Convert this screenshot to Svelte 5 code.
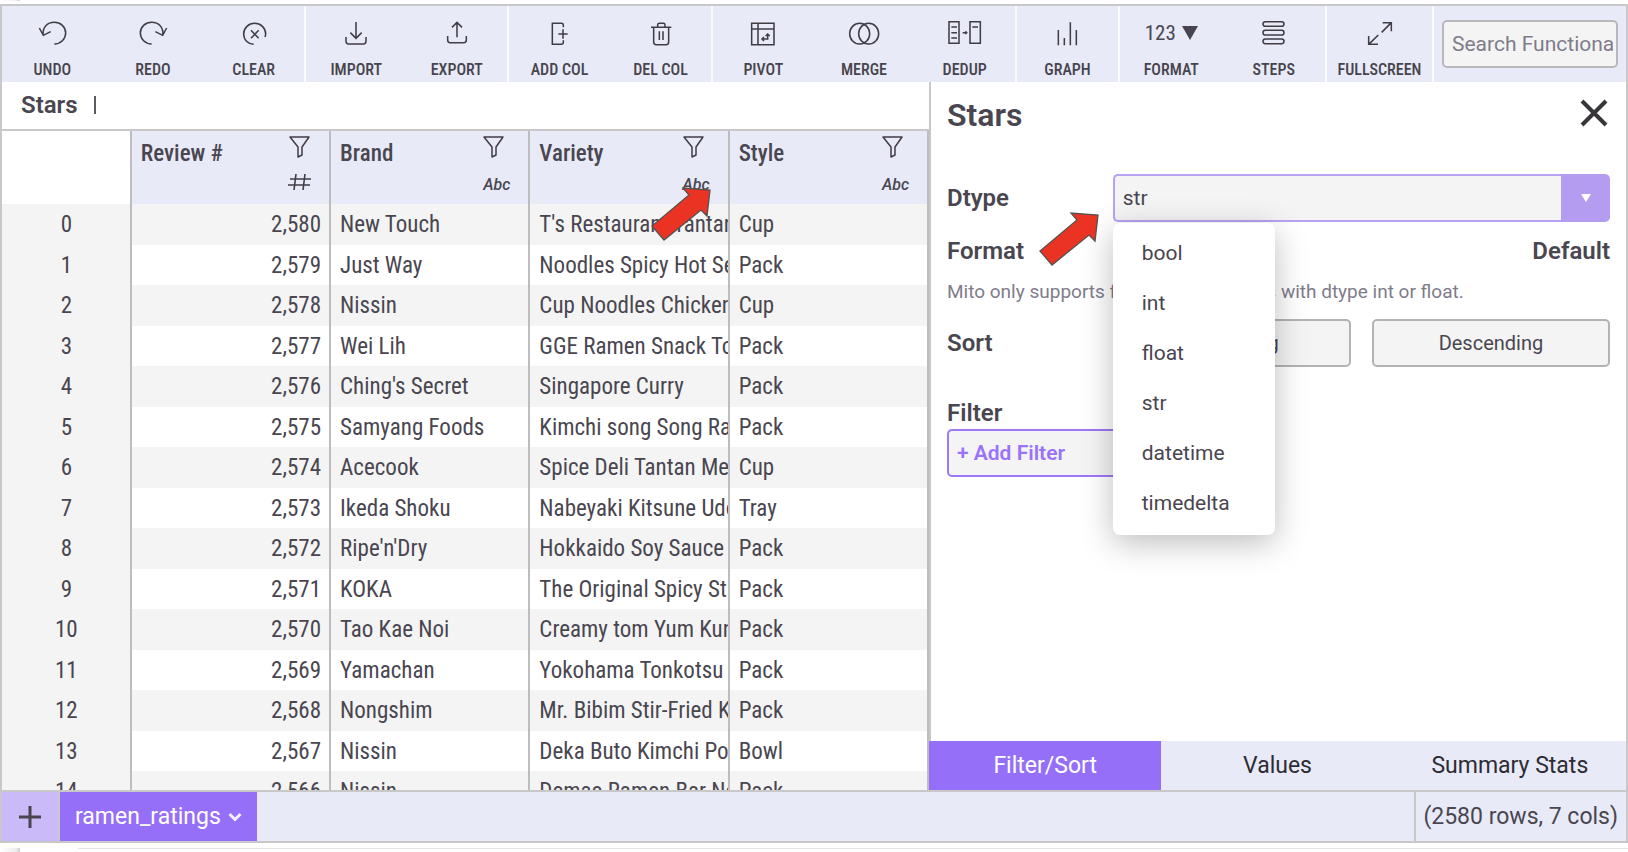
<script>
  const groups = [
    [{ id: 'undo', label: 'UNDO', x: 102 }, { id: 'redo', label: 'REDO', x: 405 }, { id: 'clear', label: 'CLEAR', x: 708 }],
    [{ id: 'import', label: 'IMPORT', x: 1013 }, { id: 'export', label: 'EXPORT', x: 1317 }],
    [{ id: 'addcol', label: 'ADD COL', x: 125 }, { id: 'delcol', label: 'DEL COL', x: 427 }],
    [{ id: 'pivot', label: 'PIVOT', x: 735 }, { id: 'merge', label: 'MERGE', x: 1038 }, { id: 'dedup', label: 'DEDUP', x: 1341 }],
    [{ id: 'graph', label: 'GRAPH', x: 118 }],
    [{ id: 'format', label: 'FORMAT', x: 0 }, { id: 'steps', label: 'STEPS', x: 737 }],
    [{ id: 'fullscreen', label: 'FULLSCREEN', x: 1055 }]
  ];

  const icons = {
    undo: 'M118 82L130 104L152 93 M130 104C126 80 143 65 163 65C182 65 197 79 197 97C197 115 182 130 163 130',
    redo: 'M500 82L488 104L466 93 M488 104C492 80 475 65 455 65C436 65 421 79 421 97C421 115 436 130 455 130',
    clear: 'M753 89L776 113M776 89L753 113 M761 131C744 130 731 117 731 100C731 82 746 68 764 68C782 68 797 82 797 100C797 103 796 106 795 109',
    import: 'M1067 64V113M1050 96L1067 113L1084 96 M1037 109V122Q1037 130 1045 130H1089Q1097 130 1097 122V109',
    export: 'M1371 110V66M1356 80L1371 65L1386 80 M1343 106V118Q1343 126 1351 126H1391Q1399 126 1399 118V106',
    addcol: 'M189 80V74Q189 68 183 68H156V131H183Q189 131 189 125V119 M174 100H202M188 86V114',
    delcol: 'M451 80H512 M471 79V73Q471 68 476 68H488Q493 68 493 73V79 M459 82V124Q459 132 467 132H496Q504 132 504 124V82 M476 92V118M487 92V118',
    pivot: 'M755 68H822V132H755Z M755 85H822M774 68V132 M786 115H803V101 M792 109L786 115L792 121 M797 106L803 100L809 106',
    merge: 'M1049 99A30 31 0 1 0 1109 99A30 31 0 1 0 1049 99 M1076 99A30 31 0 1 0 1136 99A30 31 0 1 0 1076 99',
    dedup: 'M1347 63H1377V128H1347Z M1410 63H1441V128H1410Z M1354 79H1371M1354 96H1371M1354 112H1371M1417 79H1434 M1388 96H1400M1396 92L1400 96L1396 100',
    graph: 'M143 88V134M161 112V134M179 65V134M197 88V134',
    steps: 'M765 63H814A7 7 0 0 1 814 77H765A7 7 0 0 1 765 63Z M765 89H814A7 7 0 0 1 814 103H765A7 7 0 0 1 765 89Z M765 115H814A7 7 0 0 1 814 129H765A7 7 0 0 1 765 115Z',
    fullscreen: 'M1114 95L1143 66M1117 66H1143V92 M1104 103L1075 131M1075 106V131H1103'
  };

  const columns = [
    { name: 'Review #', kind: 'number' },
    { name: 'Brand', kind: 'text' },
    { name: 'Variety', kind: 'text', marked: true },
    { name: 'Style', kind: 'text' }
  ];

  const rows = [
    ['2,580', 'New Touch', "T's Restaurant Tantanmen", 'Cup'],
    ['2,579', 'Just Way', 'Noodles Spicy Hot Sesame', 'Pack'],
    ['2,578', 'Nissin', 'Cup Noodles Chicken Vegetable', 'Cup'],
    ['2,577', 'Wei Lih', 'GGE Ramen Snack Tomato', 'Pack'],
    ['2,576', "Ching's Secret", 'Singapore Curry', 'Pack'],
    ['2,575', 'Samyang Foods', 'Kimchi song Song Ramen', 'Pack'],
    ['2,574', 'Acecook', 'Spice Deli Tantan Men', 'Cup'],
    ['2,573', 'Ikeda Shoku', 'Nabeyaki Kitsune Udon', 'Tray'],
    ['2,572', "Ripe'n'Dry", 'Hokkaido Soy Sauce Ramen', 'Pack'],
    ['2,571', 'KOKA', 'The Original Spicy Stir-Fried', 'Pack'],
    ['2,570', 'Tao Kae Noi', 'Creamy tom Yum Kung', 'Pack'],
    ['2,569', 'Yamachan', 'Yokohama Tonkotsu Shoyu', 'Pack'],
    ['2,568', 'Nongshim', 'Mr. Bibim Stir-Fried Kimchi', 'Pack'],
    ['2,567', 'Nissin', 'Deka Buto Kimchi Pork', 'Bowl'],
    ['2,566', 'Nissin', 'Demae Ramen Bar Noodle', 'Pack']
  ];

  const dtypes = ['bool', 'int', 'float', 'str', 'datetime', 'timedelta'];
  const tabs = ['Filter/Sort', 'Values', 'Summary Stats'];
  let dtype = $state('str');
  let tab = $state('Filter/Sort');
</script>

{#snippet pointer()}
  <svg width="62" height="57" viewBox="0 0 62 57" aria-hidden="true">
    <path d="M2 40L14 54L51 24L57 30L60 4L33 2L39 9Z" fill="#ea3323" stroke="#55524f" stroke-width="1.300" />
  </svg>
{/snippet}

<div class="page">
  <div class="edge top"></div>
  <main class="app">
    <header class="toolbar">
      {#each groups as group}
        <div class="group">
          {#each group as item}
            <button class="tool">
              <span class="glyph">
                {#if item.id === 'format'}
                  <span>123</span>
                  <svg width="16" height="14" viewBox="0 0 16 14"><path d="M0 0H16L8 14Z" fill="#47444f" /></svg>
                {:else}
                  <svg width="36" height="26" viewBox="{item.x} 58 108 78"><path d={icons[item.id]} fill="none" stroke="#403d45" stroke-width="4.600" /></svg>
                {/if}
              </span>
              <span class="caption">{item.label}</span>
            </button>
          {/each}
        </div>
      {/each}
      <div class="search">
        <input type="text" aria-label="Search" placeholder="Search Functionality" />
      </div>
    </header>

    <div class="work">
      <section class="sheet">
        <div class="formula"><strong>Stars</strong><span class="caret"></span></div>
        <div class="scroller">
          <table>
            <thead>
              <tr>
                <th class="corner"></th>
                {#each columns as column}
                  <th>
                    <div class="head">
                      <span class="name">{column.name}</span>
                      <div class="marks" class:centered={column.kind === 'number'}>
                        <svg width="21" height="22" viewBox="0 0 21 22"><path d="M1 1H20L13 11V19L9 21V11Z" fill="none" stroke="#403d45" stroke-width="1.500" stroke-linejoin="round" /></svg>
                        {#if column.kind === 'number'}
                          <svg width="23" height="18" viewBox="0 0 23 18"><path d="M2 6H23M0 12H22M8 1L6 17M17 1L15 17" fill="none" stroke="#403d45" stroke-width="1.600" /></svg>
                        {:else}
                          <em>Abc</em>
                        {/if}
                      </div>
                      {#if column.marked}<div class="pointer">{@render pointer()}</div>{/if}
                    </div>
                  </th>
                {/each}
              </tr>
            </thead>
            <tbody>
              {#each rows as row, i}
                <tr>
                  <th scope="row">{i}</th>
                  {#each row as cell, c}
                    <td class:num={c === 0}>{cell}</td>
                  {/each}
                </tr>
              {/each}
            </tbody>
          </table>
        </div>
      </section>

      <aside class="panel">
        <div class="body">
          <div class="title">
            <h2>Stars</h2>
            <button class="close" aria-label="Close">
              <svg width="28" height="28" viewBox="0 0 28 28"><path d="M2 2L26 26M26 2L2 26" stroke="#38363b" stroke-width="4" /></svg>
            </button>
          </div>

          <div class="line dtype">
            <label for="dtype">Dtype</label>
            <div class="picker">
              <select id="dtype" bind:value={dtype}>
                {#each dtypes as d}<option>{d}</option>{/each}
              </select>
              <span class="arrow"><svg width="10" height="8" viewBox="0 0 10 8"><path d="M0 0H10L5 8Z" fill="#fff" /></svg></span>
              <ul class="menu">
                {#each dtypes as d}
                  <li><button onclick={() => (dtype = d)}>{d}</button></li>
                {/each}
              </ul>
            </div>
            <div class="pointer">{@render pointer()}</div>
          </div>

          <div class="format"><span>Format</span><span>Default</span></div>
          <p>Mito only supports formatting columns with dtype int or float.</p>

          <div class="line">
            <span>Sort</span>
            <div class="sorts">
              <button>Ascending</button>
              <button>Descending</button>
            </div>
          </div>

          <h3>Filter</h3>
          <button class="add">+ Add Filter</button>
        </div>
        <nav>
          {#each tabs as t}
            <button class:active={tab === t} onclick={() => (tab = t)}>{t}</button>
          {/each}
        </nav>
      </aside>
    </div>

    <footer>
      <button class="plus" aria-label="Add sheet">
        <svg width="24" height="24" viewBox="0 0 24 24"><path d="M12 1V23M1 12H23" stroke="#47444f" stroke-width="3" /></svg>
      </button>
      <button class="sheettab">
        ramen_ratings
        <svg width="14" height="10" viewBox="0 0 14 10"><path d="M1.500 2L7 7.500L12.500 2" fill="none" stroke="#f3f0ff" stroke-width="3" /></svg>
      </button>
      <span class="size">(2580 rows, 7 cols)</span>
    </footer>
  </main>
  <div class="edge bottom"></div>
</div>

<style>
  :global(body) { margin: 0; background: #fff; }
  .page {
    height: 100vh;
    display: flex;
    flex-direction: column;
    overflow: hidden;
    font-family: Roboto, sans-serif;
    color: #494650;
  }
  .page *, .page { box-sizing: border-box; }
  button { font: inherit; color: inherit; border: 0; background: none; padding: 0; }
  svg { display: block; flex: none; }

  .edge { flex: none; position: relative; }
  .edge::before {
    content: '';
    display: block;
    width: 20px;
    background: linear-gradient(90deg, #fff, #eee 80%, #ccc);
  }
  .top { height: 4px; }
  .top::before { height: 1px; }
  .bottom { height: 9px; padding-top: 5px; }
  .bottom::before { height: 4px; }
  .bottom::after {
    content: '';
    display: block;
    margin: -4px 0 0 78px;
    height: 1px;
    background: #e4e4e4;
  }

  .app {
    flex: 1;
    min-height: 0;
    display: flex;
    flex-direction: column;
    border: 2px solid #c8c8c8;
  }

  .toolbar {
    flex: none;
    height: 76px;
    display: grid;
    grid-template-columns: 304fr 203fr 204fr 304fr 103fr 207fr 107fr 192fr;
    background: #e8eaf8;
  }
  .group { display: flex; min-width: 0; border-right: 2px solid #fafaff; }
  .tool {
    flex: 1 1 0;
    min-width: 0;
    padding-top: 14px;
    display: flex;
    flex-direction: column;
    align-items: center;
    gap: 14px;
  }
  .glyph { height: 26px; display: flex; align-items: center; gap: 6px; font-size: 21px; font-family: 'Roboto Condensed', Roboto, sans-serif; }
  .caption { font-family: 'Roboto Condensed', Roboto, sans-serif; font-size: 16px; font-weight: 500; line-height: 20px; color: #47444c; }
  .search { padding: 14px 8px 0; min-width: 0; }
  input {
    display: block;
    width: 100%;
    height: 48px;
    border: 2px solid #b8b8bc;
    border-radius: 5px;
    background: #f4f4f4;
    font: 21px Roboto, sans-serif;
    padding: 0 3px 0 8px;
    color: #494650;
  }
  input::placeholder { color: #7f7c8b; opacity: 1; }

  .work { flex: 1; min-height: 0; display: grid; grid-template-columns: 927fr 697fr; }
  .sheet { min-width: 0; min-height: 0; display: flex; flex-direction: column; }
  .formula {
    flex: none;
    height: 49px;
    padding: 0 0 2px 19px;
    display: flex;
    align-items: center;
    gap: 16px;
    font-size: 24px;
    border-bottom: 2px solid #c8c8c8;
  }
  strong { font-weight: 600; }
  .caret { width: 2px; height: 18px; background: #5b5862; }
  .scroller { flex: 1; min-height: 0; overflow: hidden; }
  table {
    width: 100%;
    table-layout: fixed;
    border-collapse: separate;
    border-spacing: 0;
    font-family: 'Roboto Condensed', Roboto, sans-serif;
    font-size: 23px;
    line-height: 28px;
  }
  th, td {
    padding: 1px 8px 0 9px;
    font-weight: 400;
    text-align: left;
    white-space: nowrap;
    overflow: hidden;
    border-right: 2px solid #bdbdbf;
  }
  td { padding-right: 0; }
  td.num { text-align: right; padding-right: 8px; }
  tbody th { text-align: center; background: #f4f4f4; }
  tbody tr { height: 40px; }
  tbody tr:nth-child(odd) { height: 41px; background: #f4f4f4; }
  thead th { height: 73px; padding: 0; background: #e8eaf8; overflow: visible; }
  thead th.corner { width: 14%; background: #fff; }
  .head { position: relative; height: 73px; padding: 5px 18px 0 9px; display: flex; justify-content: space-between; }
  .name { padding-top: 4px; font-weight: 500; }
  .marks { display: flex; flex-direction: column; gap: 15px; }
  .centered { align-items: center; }
  em { font: italic 500 16px/24px Roboto, sans-serif; }
  .pointer { position: absolute; z-index: 2; }
  .head .pointer { left: 120px; top: 55px; }

  .panel { min-width: 0; display: flex; flex-direction: column; border-left: 2px solid #c8c8c8; }
  .body { flex: 1; padding: 9px 16px 0; }
  .title { height: 48px; display: flex; align-items: center; justify-content: space-between; }
  .close { padding: 0 2px 4px 0; }
  h2 { margin: 0; font-size: 32px; font-weight: 600; }
  .line { position: relative; display: grid; grid-template-columns: 1fr 3fr; align-items: center; font-size: 24px; font-weight: 600; }
  .dtype { margin-top: 35px; }
  .picker { position: relative; display: flex; height: 48px; }
  select {
    appearance: none;
    flex: 1;
    min-width: 0;
    border: 2px solid #b8a2f4;
    border-right: 0;
    border-radius: 5px 0 0 5px;
    background: #f4f4f4;
    font: 21px Roboto, sans-serif;
    color: #494650;
    padding: 0 8px;
  }
  .arrow { width: 49px; border-radius: 0 5px 5px 0; background: #b49cf1; display: grid; place-items: center; }
  .menu {
    position: absolute;
    z-index: 1;
    top: 49px;
    left: 0;
    width: 162px;
    margin: 0;
    padding: 5px 0 7px;
    list-style: none;
    background: #fff;
    border-radius: 7px;
    box-shadow: 0 8px 32px rgba(0, 0, 0, 0.26);
    font-size: 21px;
    font-weight: 400;
  }
  .menu button { display: block; width: 100%; height: 50px; padding-left: 29px; text-align: left; }
  .line .pointer { left: 91px; top: 37px; }
  .format { margin-top: 15px; display: flex; justify-content: space-between; font-size: 24px; line-height: 28px; font-weight: 600; }
  p { margin: 15px 0; font-size: 19px; line-height: 24px; color: #7f7c8b; }
  .sorts { display: grid; grid-template-columns: 1fr 1fr; gap: 21px; }
  .sorts button, .add { height: 48px; border: 2px solid #b3b3b5; border-radius: 5px; background: #f4f4f4; font-size: 20px; font-weight: 400; }
  h3 { margin: 32px 0 2px; font-size: 24px; line-height: 28px; font-weight: 600; }
  .add { width: 240px; padding-left: 8px; border-color: #9d78f9; color: #9a73f9; font-size: 21px; font-weight: 600; text-align: left; }
  nav { flex: none; height: 49px; margin-left: -2px; display: grid; grid-template-columns: repeat(3, 1fr); background: #e8eaf8; font-size: 23px; color: #2e2c33; }
  nav .active { background: #966ff8; color: #fff; }

  footer { flex: none; height: 51px; display: flex; border-top: 2px solid #c8c8c8; background: #e8eaf8; font-size: 23px; }
  .plus { width: 58px; display: grid; place-items: center; background: #cbbaf8; border-right: 2px solid #c8c8c8; }
  .sheettab { padding: 0 15px; display: flex; align-items: center; gap: 7px; background: #966ff8; color: #fff; }
  .size { margin-left: auto; padding: 0 8px 0 7px; display: flex; align-items: center; border-left: 2px solid #c8c8c8; }
</style>
